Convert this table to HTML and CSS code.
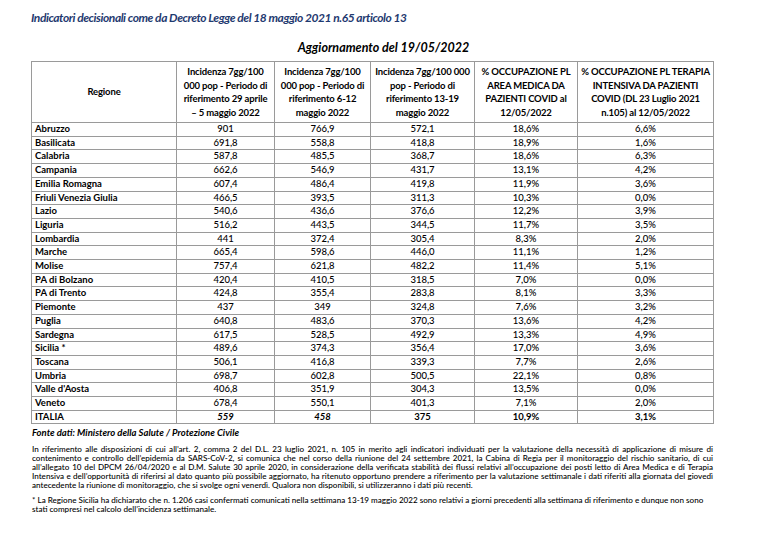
FILE: index.html
```html
<!DOCTYPE html>
<html lang="it">
<head>
<meta charset="utf-8">
<title>Indicatori decisionali</title>
<link rel="stylesheet" href="styles.css">
</head>
<body>
<div class="page">
  <h1 class="title">Indicatori decisionali come da Decreto Legge del 18 maggio 2021 n.65 articolo 13</h1>
  <h2 class="subtitle">Aggiornamento del 19/05/2022</h2>
  <table class="data">
    <colgroup>
      <col class="c1"><col class="c2"><col class="c3"><col class="c4"><col class="c5"><col class="c6">
    </colgroup>
    <thead>
      <tr class="head">
        <th>Regione</th>
        <th>Incidenza 7gg/100<br>000 pop - Periodo di<br>riferimento 29 aprile<br>– 5 maggio 2022</th>
        <th>Incidenza 7gg/100<br>000 pop - Periodo di<br>riferimento 6-12<br>maggio 2022</th>
        <th>Incidenza 7gg/100 000<br>pop - Periodo di<br>riferimento 13-19<br>maggio 2022</th>
        <th>% OCCUPAZIONE PL<br>AREA MEDICA DA<br>PAZIENTI COVID al<br>12/05/2022</th>
        <th>% OCCUPAZIONE PL TERAPIA<br>INTENSIVA DA PAZIENTI<br>COVID (DL 23 Luglio 2021<br>n.105) al 12/05/2022</th>
      </tr>
    </thead>
    <tbody>
      <tr><td>Abruzzo</td><td>901</td><td>766,9</td><td>572,1</td><td>18,6%</td><td>6,6%</td></tr>
      <tr><td>Basilicata</td><td>691,8</td><td>558,8</td><td>418,8</td><td>18,9%</td><td>1,6%</td></tr>
      <tr><td>Calabria</td><td>587,8</td><td>485,5</td><td>368,7</td><td>18,6%</td><td>6,3%</td></tr>
      <tr><td>Campania</td><td>662,6</td><td>546,9</td><td>431,7</td><td>13,1%</td><td>4,2%</td></tr>
      <tr><td>Emilia Romagna</td><td>607,4</td><td>486,4</td><td>419,8</td><td>11,9%</td><td>3,6%</td></tr>
      <tr><td>Friuli Venezia Giulia</td><td>466,5</td><td>393,5</td><td>311,3</td><td>10,3%</td><td>0,0%</td></tr>
      <tr><td>Lazio</td><td>540,6</td><td>436,6</td><td>376,6</td><td>12,2%</td><td>3,9%</td></tr>
      <tr><td>Liguria</td><td>516,2</td><td>443,5</td><td>344,5</td><td>11,7%</td><td>3,5%</td></tr>
      <tr><td>Lombardia</td><td>441</td><td>372,4</td><td>305,4</td><td>8,3%</td><td>2,0%</td></tr>
      <tr><td>Marche</td><td>665,4</td><td>598,6</td><td>446,0</td><td>11,1%</td><td>1,2%</td></tr>
      <tr><td>Molise</td><td>757,4</td><td>621,8</td><td>482,2</td><td>11,4%</td><td>5,1%</td></tr>
      <tr><td>PA di Bolzano</td><td>420,4</td><td>410,5</td><td>318,5</td><td>7,0%</td><td>0,0%</td></tr>
      <tr><td>PA di Trento</td><td>424,8</td><td>355,4</td><td>283,8</td><td>8,1%</td><td>3,3%</td></tr>
      <tr><td>Piemonte</td><td>437</td><td>349</td><td>324,8</td><td>7,6%</td><td>3,2%</td></tr>
      <tr><td>Puglia</td><td>640,8</td><td>483,6</td><td>370,3</td><td>13,6%</td><td>4,2%</td></tr>
      <tr><td>Sardegna</td><td>617,5</td><td>528,5</td><td>492,9</td><td>13,3%</td><td>4,9%</td></tr>
      <tr><td>Sicilia *</td><td>489,6</td><td>374,3</td><td>356,4</td><td>17,0%</td><td>3,6%</td></tr>
      <tr><td>Toscana</td><td>506,1</td><td>416,8</td><td>339,3</td><td>7,7%</td><td>2,6%</td></tr>
      <tr><td>Umbria</td><td>698,7</td><td>602,8</td><td>500,5</td><td>22,1%</td><td>0,8%</td></tr>
      <tr><td>Valle d'Aosta</td><td>406,8</td><td>351,9</td><td>304,3</td><td>13,5%</td><td>0,0%</td></tr>
      <tr><td>Veneto</td><td>678,4</td><td>550,1</td><td>401,3</td><td>7,1%</td><td>2,0%</td></tr>
      <tr class="total"><td>ITALIA</td><td class="it">559</td><td class="it">458</td><td>375</td><td>10,9%</td><td>3,1%</td></tr>
    </tbody>
  </table>
  <p class="source">Fonte dati: Ministero della Salute / Protezione Civile</p>
  <p class="note justify">In riferimento alle disposizioni di cui all’art. 2, comma 2 del D.L. 23 luglio 2021, n. 105 in merito agli indicatori individuati per la valutazione della necessità di applicazione di misure di contenimento e controllo dell’epidemia da SARS-CoV-2, si comunica che nel corso della riunione del 24 settembre 2021, la Cabina di Regia per il monitoraggio del rischio sanitario, di cui all’allegato 10 del DPCM 26/04/2020 e al D.M. Salute 30 aprile 2020, in considerazione della verificata stabilità dei flussi relativi all’occupazione dei posti letto di Area Medica e di Terapia Intensiva e dell’opportunità di riferirsi al dato quanto più possibile aggiornato, ha ritenuto opportuno prendere a riferimento per la valutazione settimanale i dati riferiti alla giornata del giovedì antecedente la riunione di monitoraggio, che si svolge ogni venerdì. Qualora non disponibili, si utilizzeranno i dati più recenti.</p>
  <p class="note">* La Regione Sicilia ha dichiarato che n. 1.206 casi confermati comunicati nella settimana 13-19 maggio 2022 sono relativi a giorni precedenti alla settimana di riferimento e dunque non sono stati compresi nel calcolo dell’incidenza settimanale.</p>
</div>
</body>
</html>
```

FILE: styles.css
```css
html, body {
  margin: 0;
  padding: 0;
  background: #ffffff;
}

body {
  font-family: Lato, "Open Sans", "Liberation Sans", sans-serif;
  color: #000000;
}

.page {
  padding: 10px 54px 0 31px;
}

.title {
  margin: 0;
  font-size: 12px;
  letter-spacing: -0.45px;
  font-weight: bold;
  font-style: italic;
  color: #1f3a70;
  line-height: 16px;
}

.subtitle {
  margin: 14px -54px 5px -31px;
  text-align: center;
  font-size: 12.5px;
  font-weight: bold;
  font-style: italic;
  line-height: 16px;
}

.data {
  border-collapse: collapse;
  width: 682px;
  table-layout: fixed;
  font-size: 9.5px;
  font-weight: 500;
}

.c1 { width: 145px; }
.c2 { width: 98px; }
.c3 { width: 96px; }
.c4 { width: 104px; }
.c5 { width: 103px; }
.c6 { width: 136px; }

.data th,
.data td {
  border: 1px solid #9a9a9a;
  padding: 0 3px;
}

.head {
  height: 61px;
}

.data th {
  font-weight: bold;
  text-align: center;
  vertical-align: middle;
  line-height: 13.5px;
  padding: 0 1px;
  letter-spacing: -0.15px;
  white-space: nowrap;
}

.data td {
  text-align: center;
  height: 12.7px;
  line-height: 12.7px;
}

.data td:first-child {
  text-align: left;
  font-weight: bold;
}

.total td {
  font-weight: bold;
}

.total td.it {
  font-style: italic;
}

.source {
  margin: 2px 0 0 1px;
  font-size: 9.5px;
  font-weight: bold;
  font-style: italic;
  line-height: 13px;
}

.note {
  margin: 6px 0 0 1px;
  font-size: 8.1px;
  font-weight: 500;
  line-height: 9px;
}

.justify {
  text-align: justify;
}
```
